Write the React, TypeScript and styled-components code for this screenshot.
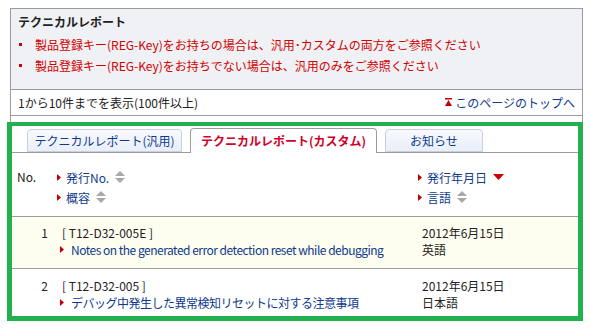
import * as React from "react";
import styled, { createGlobalStyle } from "styled-components";

const GlobalStyle = createGlobalStyle`
  body {
    margin: 0;
    background: #ffffff;
    font-family: "Noto Sans CJK JP", "Noto Sans", sans-serif;
    font-size: 12px;
    color: #222222;
  }
`;

// Data
const notices = [
  "製品登録キー(REG-Key)をお持ちの場合は、汎用･カスタムの両方をご参照ください",
  "製品登録キー(REG-Key)をお持ちでない場合は、汎用のみをご参照ください",
];

const tabs = [
  { label: "テクニカルレポート(汎用)", width: 155, active: false },
  { label: "テクニカルレポート(カスタム)", width: 187, active: true },
  { label: "お知らせ", width: 98, active: false },
];

const reports = [
  {
    no: 1,
    code: "T12-D32-005E",
    title: "Notes on the generated error detection reset while debugging",
    date: "2012年6月15日",
    lang: "英語",
  },
  {
    no: 2,
    code: "T12-D32-005",
    title: "デバッグ中発生した異常検知リセットに対する注意事項",
    date: "2012年6月15日",
    lang: "日本語",
  },
];

// Icons
const Arrow = () => (
  <ArrowIcon viewBox="0 0 4 7" width="4" height="7">
    <path d="M0 0 L4 3.5 L0 7 Z" fill="#c00000" />
  </ArrowIcon>
);

const SortBoth = () => (
  <SortIcon viewBox="0 0 10 12" width="10" height="12">
    <path d="M5 0 L10 5 L0 5 Z" fill="#a8a8a8" />
    <path d="M0 7 L10 7 L5 12 Z" fill="#a8a8a8" />
  </SortIcon>
);

const SortDown = () => (
  <SortIcon viewBox="0 0 11 6" width="11" height="6">
    <path d="M0 0 L11 0 L5.5 6 Z" fill="#cc0000" />
  </SortIcon>
);

const TopIcon = () => (
  <TopMark viewBox="0 0 7 8" width="7" height="8">
    <rect x="0" y="0" width="7" height="1.5" fill="#c00000" />
    <path d="M3.5 2 L7 8 L0 8 Z" fill="#c00000" />
  </TopMark>
);

const SortLabel = ({ label, sort }: { label: string; sort: "both" | "down" }) => (
  <HeadItem>
    <Arrow />
    <HeadLink>{label}</HeadLink>
    {sort === "both" ? <SortBoth /> : <SortDown />}
  </HeadItem>
);

export default function App() {
  return (
    <>
      <GlobalStyle />
      <Page>
        <Frame>
          <InfoBox>
            <InfoTitle>テクニカルレポート</InfoTitle>
            <NoticeList>
              {notices.map((n) => (
                <Notice key={n}>{n}</Notice>
              ))}
            </NoticeList>
          </InfoBox>
          <CountRow>
            <span>1から10件までを表示(100件以上)</span>
            <TopLink>
              <TopIcon />
              このページのトップへ
            </TopLink>
          </CountRow>
          <FrameGap />
        </Frame>

        <Highlight>
          <TabBar>
            {tabs.map((t) => (
              <Tab key={t.label} $active={t.active} $width={t.width}>
                {t.label}
              </Tab>
            ))}
          </TabBar>

          <HeadRow>
            <NoCell>No.</NoCell>
            <Stack>
              <SortLabel label="発行No." sort="both" />
              <SortLabel label="概容" sort="both" />
            </Stack>
            <Stack>
              <SortLabel label="発行年月日" sort="down" />
              <SortLabel label="言語" sort="both" />
            </Stack>
          </HeadRow>

          {reports.map((r, i) => (
            <ReportRow key={r.code} $odd={i % 2 === 0}>
              <NumCell>{r.no}</NumCell>
              <BodyStack>
                <span>[ {r.code} ]</span>
                <TitleLine>
                  <Arrow />
                  <ReportLink>{r.title}</ReportLink>
                </TitleLine>
              </BodyStack>
              <DateStack>
                <span>{r.date}</span>
                <span>{r.lang}</span>
              </DateStack>
            </ReportRow>
          ))}
        </Highlight>
      </Page>
    </>
  );
}

// Styling
const Page = styled.div`
  width: 590px;
  height: 333px;
  padding-top: 8px;
  box-sizing: border-box;
  overflow: hidden;
`;

const Frame = styled.div`
  margin-left: 10px;
  width: 573px;
  border: 1px solid #9c9c9c;
  border-bottom: none;
  box-sizing: border-box;
`;

const InfoBox = styled.div`
  background: #f0f1f5;
  padding: 4px 7px 13px;
  border-bottom: 1px solid #9c9c9c;
`;

const InfoTitle = styled.div`
  font-weight: bold;
  line-height: 18px;
  color: #222222;
`;

const NoticeList = styled.ul`
  list-style: none;
  margin: 3px 0 0;
  padding: 0;
`;

const Notice = styled.li`
  position: relative;
  padding-left: 17px;
  line-height: 21px;
  color: #d00000;

  &::before {
    content: "";
    position: absolute;
    left: 1px;
    top: 9px;
    width: 3px;
    height: 3px;
    background: #d00000;
  }
`;

const CountRow = styled.div`
  display: flex;
  justify-content: space-between;
  align-items: center;
  height: 25px;
  padding: 0 7px 0 7px;
  line-height: 22px;
  border-bottom: 1px solid #9c9c9c;
`;

const TopLink = styled.a`
  display: flex;
  align-items: center;
  gap: 3px;
  color: #0d3a8c;
  cursor: pointer;
`;

const TopMark = styled.svg`
  display: block;
  margin-top: -1px;
`;

const FrameGap = styled.div`
  height: 6px;
`;

const Highlight = styled.section`
  margin-left: 7px;
  width: 576px;
  border: 5px solid #22b14c;
  border-top-width: 4px;
  box-sizing: border-box;
`;

const TabBar = styled.div`
  display: flex;
  align-items: flex-end;
  gap: 8px;
  height: 26px;
  padding-left: 15px;
  border-bottom: 1px solid #9c9c9c;
`;

const Tab = styled.div<{ $active: boolean; $width: number }>`
  width: ${(p) => p.$width}px;
  height: ${(p) => (p.$active ? 25 : 23)}px;
  margin-bottom: ${(p) => (p.$active ? -1 : 0)}px;
  box-sizing: border-box;
  display: flex;
  align-items: center;
  justify-content: center;
  border: 1px solid ${(p) => (p.$active ? "#9c9c9c" : "#c9cfe0")};
  border-bottom: ${(p) => (p.$active ? "none" : "1px solid #c9cfe0")};
  border-radius: 4px 4px 0 0;
  background: ${(p) =>
    p.$active ? "#ffffff" : "linear-gradient(#f8fafd, #e9eef8)"};
  color: ${(p) => (p.$active ? "#d0002a" : "#0d3a8c")};
  font-weight: ${(p) => (p.$active ? "bold" : "normal")};
  padding-bottom: 1px;
`;

const HeadRow = styled.div`
  display: grid;
  grid-template-columns: 45px 1fr 160px;
  padding: 14px 0 9px;
  border-bottom: 1px solid #9c9c9c;
`;

const NoCell = styled.div`
  padding-left: 5px;
  line-height: 20px;
  color: #222222;
`;

const Stack = styled.div`
  display: flex;
  flex-direction: column;
`;

const HeadItem = styled.div`
  display: flex;
  align-items: center;
  height: 20px;
`;

const HeadLink = styled.a`
  color: #0d3a8c;
  margin: 0 6px 0 5px;
  cursor: pointer;
`;

const ArrowIcon = styled.svg`
  display: block;
  flex: none;
`;

const SortIcon = styled.svg`
  display: block;
  flex: none;
`;

const ReportRow = styled.div<{ $odd: boolean }>`
  display: grid;
  grid-template-columns: 45px 1fr 160px;
  padding: ${(p) => (p.$odd ? "7px 0 10px" : "8px 0 5px")};
  background: ${(p) => (p.$odd ? "#fdfdf0" : "#ffffff")};
  border-bottom: ${(p) => (p.$odd ? "1px solid #9c9c9c" : "none")};
  line-height: 17px;
`;

const NumCell = styled.div`
  text-align: right;
  padding-right: 9px;
`;

const BodyStack = styled.div`
  display: flex;
  flex-direction: column;
  padding-left: 5px;
`;

const TitleLine = styled.div`
  display: flex;
  align-items: center;
  margin-left: -2px;
`;

const ReportLink = styled.a`
  color: #0d3a8c;
  margin-left: 7px;
  letter-spacing: -0.5px;
  cursor: pointer;
`;

const DateStack = styled.div`
  display: flex;
  flex-direction: column;
  padding-left: 4px;
`;
